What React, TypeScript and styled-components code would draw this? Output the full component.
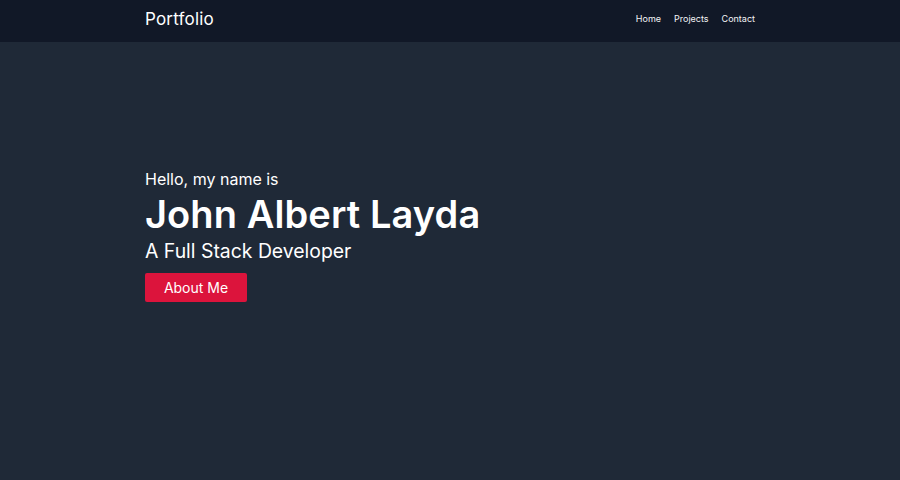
import React from "react";
import styled, { createGlobalStyle } from "styled-components";

const Global = createGlobalStyle`
  html, body { margin: 0; padding: 0; background: #1f2937; }
  body { font-family: Inter, "Open Sans", sans-serif; color: #fff; }
  * { box-sizing: border-box; }
`;

const Nav = styled.nav`
  height: 42px;
  background: #111827;
  display: flex;
  justify-content: center;
`;

const Container = styled.div`
  width: 610px;
  display: flex;
  align-items: center;
  justify-content: space-between;
  padding-bottom: 4px;
`;

const Brand = styled.a`
  font-size: 17px;
  line-height: 20px;
  color: #fff;
  text-decoration: none;
  letter-spacing: 0.2px;
`;

const Links = styled.ul`
  display: flex;
  align-items: center;
  gap: 13px;
  list-style: none;
  margin: 0;
  padding: 0;
`;

const Item = styled.li`
  display: flex;
`;

const LinkItem = styled.a`
  font-size: 9px;
  line-height: 12px;
  color: #f3f4f6;
  text-decoration: none;
`;

const Hero = styled.section`
  height: 438px;
  display: flex;
  justify-content: center;
  padding-top: 125px;
`;

const HeroInner = styled.div`
  width: 610px;
  display: flex;
  flex-direction: column;
  align-items: flex-start;
`;

const Greeting = styled.p`
  margin: 0;
  font-size: 16px;
  line-height: 24px;
`;

const Name = styled.h1`
  margin: 0;
  font-size: 38px;
  font-weight: 600;
  line-height: 46px;
  letter-spacing: 0.1px;
`;

const Role = styled.h2`
  margin: 0;
  font-size: 19.4px;
  font-weight: 400;
  line-height: 28px;
`;

const Button = styled.button`
  margin-top: 8px;
  width: 102px;
  height: 29px;
  background: #dc143c;
  color: #fff;
  border: none;
  border-radius: 2px;
  font-family: inherit;
  font-size: 14px;
  cursor: pointer;
`;

export default function App() {
  return (
    <>
      <Global />
      <Nav>
        <Container>
          <Brand href="#">Portfolio</Brand>
          <Links>
            <Item><LinkItem href="#">Home</LinkItem></Item>
            <Item><LinkItem href="#">Projects</LinkItem></Item>
            <Item><LinkItem href="#">Contact</LinkItem></Item>
          </Links>
        </Container>
      </Nav>
      <Hero>
        <HeroInner>
          <Greeting>Hello, my name is</Greeting>
          <Name>John Albert Layda</Name>
          <Role>A Full Stack Developer</Role>
          <Button>About Me</Button>
        </HeroInner>
      </Hero>
    </>
  );
}
